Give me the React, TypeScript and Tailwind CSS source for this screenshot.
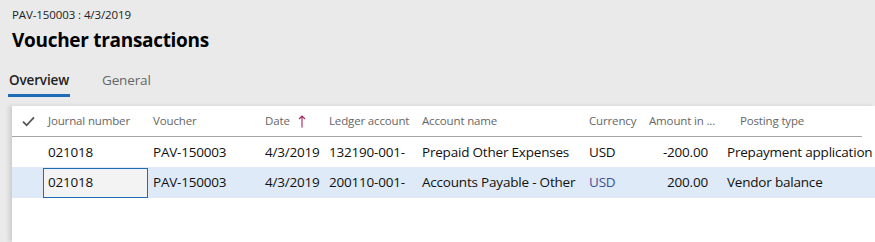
import React from "react";

const font = { fontFamily: '"Open Sans", "Liberation Sans", sans-serif' };

export default function App() {
  const rows = [
    { j: "021018", v: "PAV-150003", d: "4/3/2019", l: "132190-001-", a: "Prepaid Other Expenses", c: "USD", amt: "-200.00", p: "Prepayment application", sel: false },
    { j: "021018", v: "PAV-150003", d: "4/3/2019", l: "200110-001-", a: "Accounts Payable - Other", c: "USD", amt: "200.00", p: "Vendor balance", sel: true },
  ];
  return (
    <div className="w-[875px] h-[242px] bg-[#eaeaea] overflow-hidden flex flex-col" style={font}>
      <div className="pl-[12px] pt-[6px] text-[11.5px] leading-[18px] text-[#222] tracking-[-0.1px]">PAV-150003 : 4/3/2019</div>
      <div className="pl-[12px] mt-[3px] text-[19px] leading-[26px] font-bold text-black tracking-[-0.3px]">Voucher transactions</div>
      <div className="flex pl-[8px] mt-[17px] text-[13.5px] leading-[20px] tracking-[-0.15px]">
        <div className="flex flex-col">
          <span className="px-[1px] font-semibold text-[#222]">Overview</span>
          <span className="mt-[4px] h-[3px] bg-[#1e6bb8]" />
        </div>
        <span className="ml-[32px] text-[#666]">General</span>
      </div>
      <div className="ml-[12px] mt-[9px] flex-1 bg-white shadow-[-3px_0_4px_rgba(0,0,0,0.12)]">
        <div className="flex items-center h-[31px] w-[850px] border-b border-[#a6a6a6] text-[11.5px] tracking-[-0.15px] text-[#666] whitespace-nowrap">
          <div className="w-[31px] shrink-0 flex justify-center pl-[1px]">
            <svg width="13" height="11" viewBox="0 0 13 11"><path d="M1 5.6 L4.6 9.3 L12 1.3" fill="none" stroke="#555" strokeWidth="1.8" /></svg>
          </div>
          <div className="w-[105px] shrink-0 pl-[5px]">Journal number</div>
          <div className="w-[112px] shrink-0 pl-[5px]">Voucher</div>
          <div className="w-[64px] shrink-0 pl-[5px] flex items-center">Date
            <svg className="ml-[8px]" width="8" height="13" viewBox="0 0 8 13"><path d="M4 12.5 V1 M1 4 L4 1 L7 4" fill="none" stroke="#a4265c" strokeWidth="1.1" /></svg>
          </div>
          <div className="w-[93px] shrink-0 pl-[5px]">Ledger account</div>
          <div className="w-[167px] shrink-0 pl-[5px]">Account name</div>
          <div className="w-[60px] shrink-0 pl-[5px]">Currency</div>
          <div className="w-[78px] shrink-0 pl-[5px]">Amount in ...</div>
          <div className="shrink-0 pl-[18px]">Posting type</div>
        </div>
        {rows.map((r, i) => (
          <div key={i} className={`flex items-center text-[13.5px] tracking-[-0.2px] text-[#111] whitespace-nowrap ${r.sel ? "h-[31px] bg-[#deeaf7]" : "h-[30px]"}`}>
            <div className="w-[31px] shrink-0" />
            <div className={`w-[105px] shrink-0 flex items-center ${r.sel ? "h-[30px] border border-[#1e6bb8] bg-[#f3f3f3] pl-[4px]" : "h-[30px] pl-[5px]"}`}>{r.j}</div>
            <div className="w-[112px] shrink-0 pl-[5px]">{r.v}</div>
            <div className="w-[64px] shrink-0 pl-[5px]">{r.d}</div>
            <div className="w-[93px] shrink-0 pl-[5px]">{r.l}</div>
            <div className="w-[167px] shrink-0 pl-[5px]">{r.a}</div>
            <div className={`w-[60px] shrink-0 pl-[5px] ${r.sel ? "text-[#3d4f9a]" : ""}`}>{r.c}</div>
            <div className="w-[78px] shrink-0 pr-[14px] text-right">{r.amt}</div>
            <div className="shrink-0 pl-[5px]">{r.p}</div>
          </div>
        ))}
      </div>
    </div>
  );
}
